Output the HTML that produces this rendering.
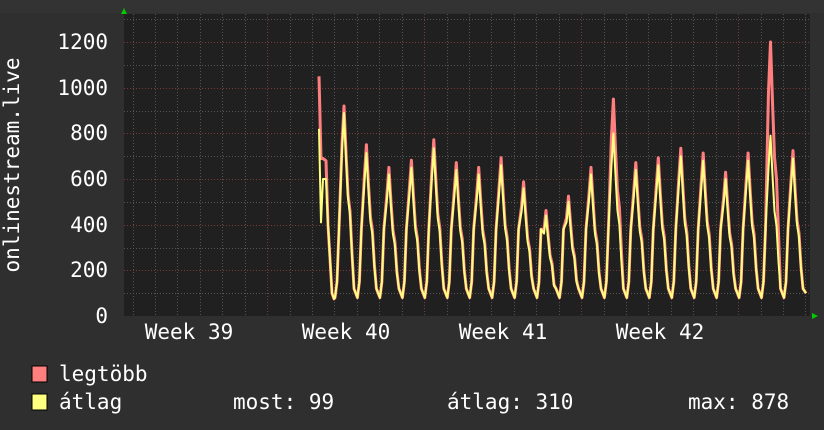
<!DOCTYPE html>
<html><head><meta charset="utf-8"><style>
html,body{margin:0;padding:0;background:#2f2f2f;width:824px;height:430px;overflow:hidden}
svg{display:block}
text{font-family:"DejaVu Sans Mono","Liberation Mono",monospace;fill:#fff;font-size:21px}
</style></head><body>
<svg id="s" width="824" height="430" xmlns="http://www.w3.org/2000/svg">
<rect x="0" y="0" width="824" height="430" fill="#2f2f2f"/>
<rect x="0" y="0" width="824" height="13" fill="#333"/>
<rect x="124" y="14" width="686" height="302" fill="#202020"/>
<g id="grid"></g>
<g id="data"></g>
<polygon points="121,14 127,14 124,8" fill="#0c0"/>
<polygon points="812,313 812,319 818,316" fill="#0c0"/>
<text x="108" y="49" text-anchor="end">1200</text>
<text x="108" y="95" text-anchor="end">1000</text>
<text x="108" y="140" text-anchor="end">800</text>
<text x="108" y="186" text-anchor="end">600</text>
<text x="108" y="232" text-anchor="end">400</text>
<text x="108" y="277" text-anchor="end">200</text>
<text x="108" y="323" text-anchor="end">0</text>
<text x="189" y="339" text-anchor="middle">Week 39</text>
<text x="346" y="339" text-anchor="middle">Week 40</text>
<text x="503" y="339" text-anchor="middle">Week 41</text>
<text x="660" y="339" text-anchor="middle">Week 42</text>
<text transform="translate(19,165) rotate(-90)" text-anchor="middle">onlinestream.live</text>
<rect x="32" y="366" width="15" height="16" fill="#ff7f7f" stroke="#000" stroke-width="1"/>
<rect x="32" y="394" width="15" height="16" fill="#ffff7f" stroke="#000" stroke-width="1"/>
<text x="59" y="381">legtöbb</text>
<text x="59" y="409">átlag</text>
<text x="233" y="409">most: 99</text>
<text x="447" y="409">átlag: 310</text>
<text x="688" y="409">max: 878</text>
</svg>
<script>
var NS="http://www.w3.org/2000/svg";
var g=document.getElementById("grid"),d=document.getElementById("data");
function ln(x1,y1,x2,y2,c){var l=document.createElementNS(NS,"line");l.setAttribute("x1",x1);l.setAttribute("y1",y1);l.setAttribute("x2",x2);l.setAttribute("y2",y2);l.setAttribute("stroke",c);l.setAttribute("stroke-dasharray","1,2");l.setAttribute("stroke-width","1");g.appendChild(l);}
function Y(v){return 316-v*0.2283;}
for(var v=100;v<=1300;v+=100){var y=Math.round(Y(v))+0.5;ln(124,y,810,y,v%200==0?"#7a3a3a":"#555");}
for(var i=0;i<31;i++){var x=Math.round(132.5+22.43*i)+0.5;if(x>810)break;var red=(i%7==6);ln(x,14,x,316,red?"#7a3a3a":"#555");}
var hy=[889,714,620,650,735,640,620,660,560,440,500,620,800,640,660,700,680,600,680,790,690];
function series(scale,spec){
 var p=[[319,spec?1050:820],[321,spec?690:410],[323,spec?690:600],[326,spec?680:600],[328,400],[330,250],[332,100],[334,75]];
 for(var i=0;i<hy.length;i++){var c=344+22.45*i,h=hy[i]*scale;
  if(spec&&i==12)h=950; if(spec&&i==19)h=1200; if(spec&&i==0)h=920;
  p.push([c-9,80],[c-7,150],[c-5,380],[c-2,h*0.82],[c,h],[c+2,h*0.78],[c+4,h*0.58],[c+6,h*0.5],[c+8,h*0.3],[c+10,120]);
 }
 p.push([806,100]);
 return p.map(function(q){return q[0].toFixed(1)+","+Y(q[1]).toFixed(1)}).join(" ");
}
function pl(pts,c,w){var e=document.createElementNS(NS,"polyline");e.setAttribute("points",pts);e.setAttribute("fill","none");e.setAttribute("stroke",c);e.setAttribute("stroke-width",w);e.setAttribute("stroke-linejoin","round");d.appendChild(e);}
pl(series(1.05,true),"#ff7f7f",3);
pl(series(1,false),"#ffff7f",2);
</script>
</body></html>
